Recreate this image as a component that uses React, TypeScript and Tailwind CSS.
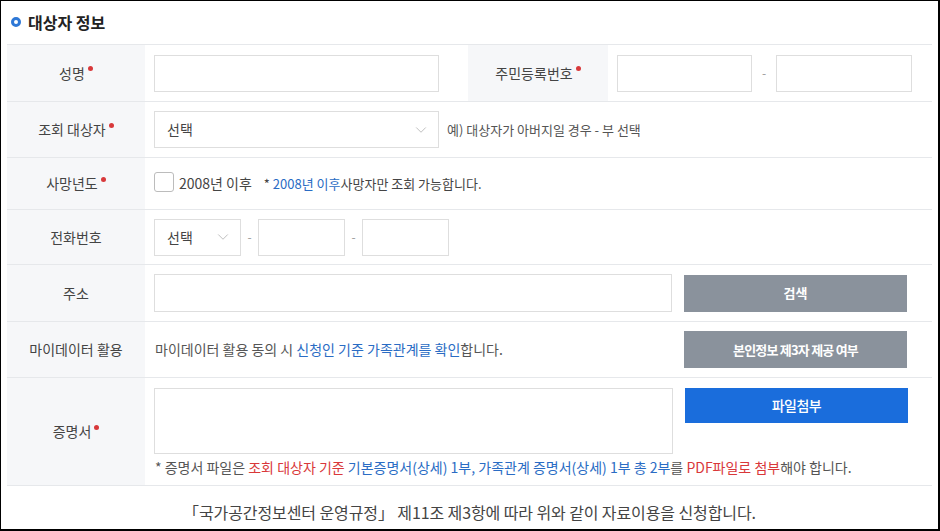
import { ChevronDown } from 'lucide-react';

const font = { fontFamily: '"Noto Sans CJK KR", "Noto Sans", sans-serif' };

function Req() {
  return <span className="inline-block w-[5px] h-[5px] rounded-full bg-[#d8393b] ml-[3px] mb-[9px]" />;
}

function Label({ text, req }: { text: string; req?: boolean }) {
  return (
    <div className="bg-[#f6f7f9] flex items-center justify-center text-[14px] text-[#444]">
      <span>{text}</span>
      {req && <Req />}
    </div>
  );
}

function Select({ w }: { w: string }) {
  return (
    <div className={`${w} h-[37px] border border-[#dedede] flex items-center justify-between pl-[12px] pr-[8px] text-[14px] text-[#444]`}>
      <span>선택</span>
      <ChevronDown size={18} strokeWidth={1} className="text-[#aaa]" />
    </div>
  );
}

function Dash() {
  return <span className="w-[17px] text-center text-[12px] text-[#999]">-</span>;
}

export default function App() {
  return (
    <div style={font} className="w-[940px] h-[531px] bg-white border-t border-l border-r-2 border-b-2 border-black px-[6px] overflow-hidden">
      {/* Header */}
      <div className="h-[43px] flex items-center pl-[4px] pb-[2px]">
        <span className="w-[10px] h-[10px] rounded-full border-[3.5px] border-[#2e78d6] mr-[7px]" />
        <h2 className="text-[16px] font-bold text-[#222]">대상자 정보</h2>
      </div>

      {/* Table */}
      <div className="border-t border-[#e6e8eb]">
        {/* 성명 / 주민등록번호 */}
        <div className="grid grid-cols-[138px_323px_140px_1fr] h-[57px] border-b border-[#e6e8eb]">
          <Label text="성명" req />
          <div className="flex items-center pl-[9px]">
            <div className="w-[285px] h-[37px] border border-[#dedede]" />
          </div>
          <Label text="주민등록번호" req />
          <div className="flex items-center pl-[9px]">
            <div className="w-[135px] h-[37px] border border-[#dedede]" />
            <span className="w-[24px] text-center text-[12px] text-[#999]">-</span>
            <div className="w-[136px] h-[37px] border border-[#dedede]" />
          </div>
        </div>

        {/* 조회 대상자 */}
        <div className="grid grid-cols-[138px_1fr] h-[56px] border-b border-[#e6e8eb]">
          <Label text="조회 대상자" req />
          <div className="flex items-center pl-[9px] gap-[8px]">
            <Select w="w-[285px]" />
            <span className="text-[13px] text-[#555]">예) 대상자가 아버지일 경우 - 부 선택</span>
          </div>
        </div>

        {/* 사망년도 */}
        <div className="grid grid-cols-[138px_1fr] h-[52px] border-b border-[#e6e8eb]">
          <Label text="사망년도" req />
          <div className="flex items-center pl-[9px] text-[14px] text-[#444]">
            <span className="w-[20px] h-[20px] border border-[#bcbcbc] rounded-[3px] mr-[5px] -mt-[3px]" />
            <span>2008년 이후</span>
            <span className="ml-[12px] text-[13px]">
              * <span className="text-[#2a6cc4]">2008년 이후</span>사망자만 조회 가능합니다.
            </span>
          </div>
        </div>

        {/* 전화번호 */}
        <div className="grid grid-cols-[138px_1fr] h-[55px] border-b border-[#e6e8eb]">
          <Label text="전화번호" />
          <div className="flex items-center pl-[9px]">
            <Select w="w-[87px]" />
            <Dash />
            <div className="w-[87px] h-[37px] border border-[#dedede]" />
            <Dash />
            <div className="w-[87px] h-[37px] border border-[#dedede]" />
          </div>
        </div>

        {/* 주소 */}
        <div className="grid grid-cols-[138px_1fr] h-[57px] border-b border-[#e6e8eb]">
          <Label text="주소" />
          <div className="flex items-center pl-[9px] gap-[12px]">
            <div className="w-[518px] h-[38px] border border-[#dedede]" />
            <button className="w-[223px] h-[37px] bg-[#8a929c] text-white text-[13px] font-bold">검색</button>
          </div>
        </div>

        {/* 마이데이터 활용 */}
        <div className="grid grid-cols-[138px_1fr] h-[56px] border-b border-[#e6e8eb]">
          <Label text="마이데이터 활용" />
          <div className="flex items-center pl-[9px] gap-[12px]">
            <p className="w-[518px] pl-[1px] text-[14px] text-[#555]">
              마이데이터 활용 동의 시 <span className="text-[#2a6cc4]">신청인 기준 가족관계를 확인</span>합니다.
            </p>
            <button className="w-[223px] h-[37px] bg-[#8a929c] text-white text-[13px] font-bold tracking-[-0.8px]">본인정보 제3자 제공 여부</button>
          </div>
        </div>

        {/* 증명서 */}
        <div className="grid grid-cols-[138px_1fr] h-[108px] border-b border-[#e6e8eb]">
          <Label text="증명서" req />
          <div className="pl-[9px] pt-[10px]">
            <div className="flex items-start gap-[12px]">
              <div className="w-[519px] h-[66px] border border-[#dedede]" />
              <button className="w-[223px] h-[35px] bg-[#1a6ddc] text-white text-[14px] font-medium tracking-[-0.5px]">파일첨부</button>
            </div>
            <p className="mt-[3px] pl-[1px] text-[14px] text-[#555]">
              * 증명서 파일은 <span className="text-[#d9383a]">조회 대상자 기준</span>{' '}
              <span className="text-[#2a6cc4]">기본증명서(상세) 1부, 가족관계 증명서(상세) 1부 총 2부</span>를{' '}
              <span className="text-[#d9383a]">PDF파일로 첨부</span>해야 합니다.
            </p>
          </div>
        </div>
      </div>

      {/* Footer */}
      <p className="pt-[14px] text-center text-[16px] text-[#444] tracking-[-0.1px]">
        「국가공간정보센터 운영규정」 제11조 제3항에 따라 위와 같이 자료이용을 신청합니다.
      </p>
    </div>
  );
}
